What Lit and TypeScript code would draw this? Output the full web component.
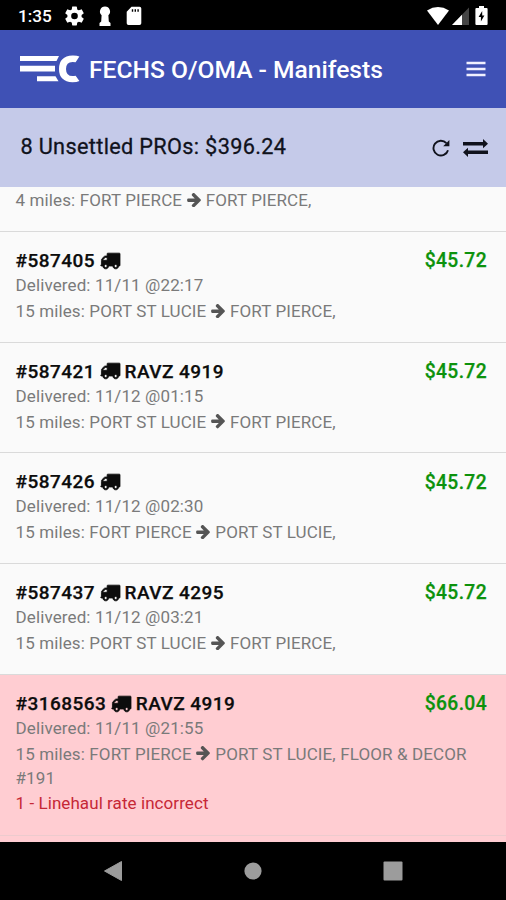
import { LitElement, html, css, nothing } from "lit";
import { customElement, property } from "lit/decorators.js";

interface Pro {
  id: string;
  trailer?: string;
  delivered: string;
  miles: number;
  from: string;
  to: string;
  amount: string;
  error?: string;
}

const PROS: Pro[] = [
  { id: "587405", delivered: "11/11 @22:17", miles: 15, from: "PORT ST LUCIE", to: "FORT PIERCE,", amount: "$45.72" },
  { id: "587421", trailer: "RAVZ 4919", delivered: "11/12 @01:15", miles: 15, from: "PORT ST LUCIE", to: "FORT PIERCE,", amount: "$45.72" },
  { id: "587426", delivered: "11/12 @02:30", miles: 15, from: "FORT PIERCE", to: "PORT ST LUCIE,", amount: "$45.72" },
  { id: "587437", trailer: "RAVZ 4295", delivered: "11/12 @03:21", miles: 15, from: "PORT ST LUCIE", to: "FORT PIERCE,", amount: "$45.72" },
  { id: "3168563", trailer: "RAVZ 4919", delivered: "11/11 @21:55", miles: 15, from: "FORT PIERCE", to: "PORT ST LUCIE, FLOOR & DECOR #191", amount: "$66.04", error: "1 - Linehaul rate incorrect" },
];

const arrow = html`<svg class="arrow" width="14" height="14.4" viewBox="128 189 1472 1550"><path fill="currentColor" d="M1600 960q0 54-37 91l-651 651q-39 37-91 37-51 0-90-37l-75-75q-38-38-38-91t38-91l293-293h-704q-52 0-84.5-37.5t-32.5-90.5v-128q0-53 32.5-90.5t84.5-37.5h704l-293-294q-38-36-38-90t38-90l75-75q38-38 90-38 53 0 91 38l651 651q37 35 37 90z"/></svg>`;

const truck = html`<svg class="truck" width="20" height="16" viewBox="0 256 1792 1408"><path fill="currentColor" stroke="currentColor" stroke-width="70" d="M640 1408q0-52-38-90t-90-38-90 38-38 90 38 90 90 38 90-38 38-90zm-384-512h384v-256h-158q-13 0-22 9l-195 195q-9 9-9 22v30zm1280 512q0-52-38-90t-90-38-90 38-38 90 38 90 90 38 90-38 38-90zm256-1088v1024q0 15-4 26.5t-13.5 18.5-16.5 11.5-23.5 6-22.5 2-25.5 0-22.5-.5q0 106-75 181t-181 75-181-75-75-181h-384q0 106-75 181t-181 75-181-75-75-181h-64q-3 0-22.5.5t-25.5 0-22.5-2-23.5-6-16.5-11.5-13.5-18.5-4-26.5q0-26 19-45t45-19v-320q0-8-.5-35t0-38 2.5-34.5 6.5-37 14-30.5 22.5-30l198-198q19-19 50.5-32t58.5-13h160v-192q0-26 19-45t45-19h1024q26 0 45 19t19 45z"/></svg>`;

@customElement("pro-row")
class ProRow extends LitElement {
  @property({ attribute: false }) pro!: Pro;

  static styles = css`
    :host { display: block; background: #fafafa; border-bottom: 1px solid #dadada; box-sizing: border-box; height: 110.7px; padding: 17px 19px 0 15.5px; }
    :host([error]) { background: #ffcdd2; height: 161px; border-bottom-color: #eccbce; }
    .top { display: flex; justify-content: space-between; height: 24px; line-height: 24px; font-size: 19px; font-weight: 500; letter-spacing: 0.46px; color: #0c0c0c; -webkit-text-stroke: 0.25px currentColor; }
    .name { white-space: pre; }
    .truck { vertical-align: -1.8px; margin: 0 4.5px 0 5px; overflow: visible; }
    .amount { color: #0c920c; font-size: 19.3px; letter-spacing: 0.35px; padding-top: 0.4px; }
    .line { font-size: 17px; line-height: 24.5px; color: #7a7a7a; letter-spacing: 0.12px; }
    .route { margin-top: 1.5px; display: block; }
    .arrow { vertical-align: -1px; margin: 0 5px 0 4.5px; color: #555; }
    .err { color: #c62836; letter-spacing: 0.07px; }
  `;

  render() {
    const p = this.pro;
    return html`
      <div class="top">
        <span class="name">#${p.id}${truck}${p.trailer ?? nothing}</span>
        <span class="amount">${p.amount}</span>
      </div>
      <div class="line">Delivered: ${p.delivered}</div>
      <div class="line route">${p.miles} miles: ${p.from}${arrow}${p.to}</div>
      ${p.error ? html`<div class="line err">${p.error}</div>` : nothing}
    `;
  }
}

@customElement("app-root")
class AppRoot extends LitElement {
  static styles = css`
    :host { display: flex; flex-direction: column; width: 506px; height: 900px; overflow: hidden; background: #fafafa; font-family: Roboto, "Liberation Sans", sans-serif; }
    svg { display: block; flex: none; }
    .status { flex: none; height: 29.5px; background: #000; color: #fff; display: flex; align-items: center; padding: 2px 18px 0; box-sizing: border-box; }
    .clock { font-size: 17.2px; font-weight: 500; width: 47px; }
    .left, .right { display: flex; align-items: center; }
    .left { gap: 15px; }
    .right { margin-left: auto; gap: 3px; }
    .battery { margin: 0 0.5px 0 2.5px; }
    .bar { flex: none; height: 78.5px; background: #3f51b5; color: #fff; display: flex; align-items: center; padding: 1px 20px 0; box-sizing: border-box; }
    .title { font-size: 24.6px; font-weight: 500; margin-left: 9px; white-space: pre; }
    .menu { margin-left: auto; }
    .summary { flex: none; height: 79px; background: #c5cae9; color: #10121c; display: flex; align-items: center; padding: 0 18px 2px 20.5px; box-sizing: border-box; }
    .total { font-size: 21.7px; letter-spacing: 0.33px; -webkit-text-stroke: 0.3px #10121c; }
    .actions { display: flex; align-items: center; margin-left: auto; gap: 13px; padding-top: 3px; }
    .list { flex: 1; min-height: 0; overflow: hidden; display: flex; flex-direction: column; background: #ffcdd2; }
    .list > * { flex: none; }
    .partial { height: 45px; box-sizing: border-box; border-bottom: 1px solid #dadada; background: #fafafa; padding: 1px 15.5px; font-size: 17px; line-height: 24.5px; letter-spacing: 0.12px; color: #7a7a7a; }
    .partial .arrow { display: inline; vertical-align: -1px; margin: 0 5px 0 4.5px; color: #555; }
    .nav { flex: none; height: 58px; background: #000; display: flex; align-items: center; justify-content: space-between; padding: 0 103px; box-sizing: border-box; }
  `;

  render() {
    return html`
      <div class="status">
        <div class="clock">1:35</div>
        <div class="left">
          <svg width="19" height="20" viewBox="2 2 20 20"><path fill="#fff" d="M19.43 12.98c.04-.32.07-.64.07-.98s-.03-.66-.07-.98l2.11-1.65c.19-.15.24-.42.12-.64l-2-3.46c-.12-.22-.39-.3-.61-.22l-2.49 1c-.52-.4-1.08-.73-1.69-.98l-.38-2.65A.49.49 0 0 0 14 2h-4c-.25 0-.46.18-.49.42l-.38 2.65c-.61.25-1.17.59-1.69.98l-2.49-1c-.23-.09-.49 0-.61.22l-2 3.46c-.13.22-.07.49.12.64l2.11 1.65c-.04.32-.07.65-.07.98s.03.66.07.98l-2.11 1.65c-.19.15-.24.42-.12.64l2 3.46c.12.22.39.3.61.22l2.49-1c.52.4 1.08.73 1.69.98l.38 2.65c.03.24.24.42.49.42h4c.25 0 .46-.18.49-.42l.38-2.65c.61-.25 1.17-.59 1.69-.98l2.49 1c.23.09.49 0 .61-.22l2-3.46c.12-.22.07-.49-.12-.64zM12 15.5a3.5 3.5 0 1 1 0-7 3.5 3.5 0 0 1 0 7z"/></svg>
          <svg width="12" height="20" viewBox="0 0 12 20"><path fill="#fff" d="M6 0.5A5 5 0 0 1 9.4 9.2L9.8 15.5L11.5 17V20H0.5V17L2.2 15.5L2.6 9.2A5 5 0 0 1 6 0.5Z"/></svg>
          <svg width="16" height="20" viewBox="0 0 16 20"><path fill="#fff" fill-rule="evenodd" d="M5.5 0.8H13.5Q15.3 0.8 15.3 2.6V17.2Q15.3 19 13.5 19H2.5Q0.7 19 0.7 17.2V5.8ZM5.8 3.2V5.8H7.2V3.2ZM8.6 3.2V5.8H10V3.2ZM11.4 3.2V5.8H12.8V3.2Z"/></svg>
        </div>
        <div class="right">
          <svg class="wifi" width="22" height="18" viewBox="0 0 22 18"><path fill="#fff" d="M0 3.4Q11 -3.4 22 3.4L11 18Z"/></svg>
          <svg width="17" height="18" viewBox="0 0 17 18"><path fill="#444" d="M17 0.5V18H0Z"/><path fill="#fff" d="M10 7.7V18H0Z"/></svg>
          <svg class="battery" width="13" height="19" viewBox="0 0 13 19"><path fill="#fff" fill-rule="evenodd" d="M4 0H9V2H11.6Q12.6 2 12.6 3V18Q12.6 19 11.6 19H1.4Q0.4 19 0.4 18V3Q0.4 2 1.4 2H4ZM7.2 5L3.6 11H5.9V15.6L9.4 9.4H7.2Z"/></svg>
        </div>
      </div>
      <div class="bar">
        <svg width="60" height="28" viewBox="0 0 60 28">
          <g fill="#fff"><path d="M0 1H39L36.5 6H0Z"/><path d="M0 10.8H35V16.4H0Z"/><path d="M17 21.2H35.5L38.5 26.2H17Z"/>
          <path d="M59.4 1.4L55.6 7.2Q46 5.4 46 14Q46 22.6 55.6 20.8L59.4 26Q57 27.3 52.5 27.3Q39 26.6 39 14Q39 1 52.5 0.5Q57 0.4 59.4 1.4Z"/></g>
        </svg>
        <div class="title">FECHS O/OMA - Manifests</div>
        <svg class="menu" width="20" height="16" viewBox="0 0 20 16"><path stroke="#f0f0ff" stroke-width="2.4" d="M0.5 2H19.5M0.5 8H19.5M0.5 14H19.5"/></svg>
      </div>
      <div class="summary">
        <div class="total">8 Unsettled PROs: $396.24</div>
        <div class="actions">
          <svg width="18" height="18" viewBox="0 0 18 18"><path fill="none" stroke="#10121c" stroke-width="1.9" d="M14.4 4.2A7.4 7.4 0 1 0 16 11.2"/><path fill="#10121c" d="M17.4 1V7.2H11.2Z"/></svg>
          <svg width="25" height="18" viewBox="0 0 25 18"><path fill="#10121c" d="M0 3H20V0L25 4.8L20 9.2V6.5H0ZM25 11.5H5V8.8L0 13.2L5 18V15H25Z"/></svg>
        </div>
      </div>
      <div class="list">
        <div class="partial">4 miles: FORT PIERCE${arrow}FORT PIERCE,</div>
        ${PROS.map((p) => html`<pro-row .pro=${p} ?error=${!!p.error}></pro-row>`)}
      </div>
      <div class="nav">
        <svg width="20" height="22" viewBox="0 0 20 22"><path fill="#9c9c9c" stroke="#9c9c9c" stroke-linejoin="round" d="M1.5 11L18.5 1.5V20.5Z"/></svg>
        <svg width="18" height="18" viewBox="0 0 18 18"><circle cx="9" cy="9" r="8.6" fill="#9c9c9c"/></svg>
        <svg width="20" height="20" viewBox="0 0 20 20"><rect x="0.5" y="0.5" width="19" height="19" rx="1" fill="#9c9c9c"/></svg>
      </div>
    `;
  }
}
